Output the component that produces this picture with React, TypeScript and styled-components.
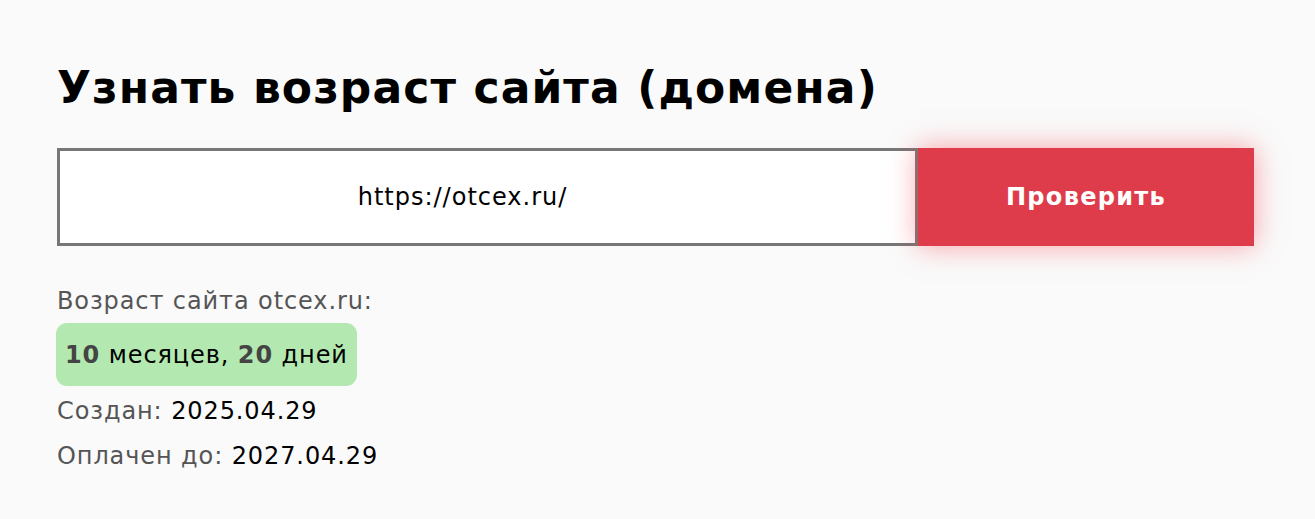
import React from "react";
import styled, { createGlobalStyle } from "styled-components";

const GlobalStyle = createGlobalStyle`
  html, body {
    margin: 0;
    padding: 0;
    background: #fafafa;
  }
  body {
    font-family: "DejaVu Sans", "Noto Sans", sans-serif;
    color: #000;
  }
`;

const Page = styled.div`
  padding: 52px 57px 0 57px;
`;

const Title = styled.h1`
  margin: 0 0 24px 0;
  font-size: 44px;
  font-weight: 700;
  line-height: 72px;
  letter-spacing: 1.1px;
`;

const CheckForm = styled.form`
  display: flex;
  width: 1197px;
  height: 98px;
`;

const UrlInput = styled.input`
  flex: 1;
  box-sizing: border-box;
  height: 100%;
  padding: 0 50px 0 0;
  border: 3px solid #777;
  background: #fff;
  font-family: inherit;
  font-size: 24px;
  letter-spacing: 1px;
  text-align: center;
  color: #000;
  outline: none;
`;

const SubmitButton = styled.button`
  width: 336px;
  height: 100%;
  border: none;
  background: #df3c4b;
  color: #fff;
  font-family: inherit;
  font-size: 24px;
  font-weight: 700;
  letter-spacing: 1.3px;
  box-shadow: 0 0 26px rgba(245, 70, 80, 0.5);
  cursor: pointer;
`;

const Result = styled.div`
  margin-top: 33px;
  display: flex;
  flex-direction: column;
  align-items: flex-start;
  font-size: 24px;
  letter-spacing: 0.9px;
`;

const Line = styled.div`
  line-height: 45px;
  color: #555;
`;

const Value = styled.span`
  color: #000;
`;

const AgeBadge = styled.div`
  margin: -1px 0 3px -1px;
  padding: 0 9px;
  height: 63px;
  display: flex;
  align-items: center;
  background: #b3e9b0;
  border-radius: 11px;
  color: #000;
`;

const Num = styled.b`
  color: #444;
  font-weight: 700;
`;

export default function App() {
  return (
    <>
      <GlobalStyle />
      <Page>
        <Title>Узнать возраст сайта (домена)</Title>
        <CheckForm onSubmit={(e) => e.preventDefault()}>
          <UrlInput defaultValue="https://otcex.ru/" />
          <SubmitButton type="submit">Проверить</SubmitButton>
        </CheckForm>
        <Result>
          <Line>Возраст сайта otcex.ru:</Line>
          <AgeBadge>
            <span>
              <Num>10</Num> месяцев, <Num>20</Num> дней
            </span>
          </AgeBadge>
          <Line>
            Создан: <Value>2025.04.29</Value>
          </Line>
          <Line>
            Оплачен до: <Value>2027.04.29</Value>
          </Line>
        </Result>
      </Page>
    </>
  );
}
